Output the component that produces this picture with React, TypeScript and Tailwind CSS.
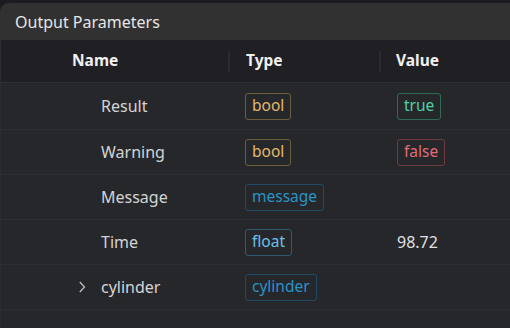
import React from "react";

type Row = {
  name: string;
  type: string;
  typeCls: string;
  value?: { text: string; cls: string } | string;
  chevron?: boolean;
};

const rows: Row[] = [
  {
    name: "Result",
    type: "bool",
    typeCls: "border-[#6e5d3c] text-[#e3b76a]",
    value: { text: "true", cls: "border-[#2f6a57] text-[#4fd1a5]" },
  },
  {
    name: "Warning",
    type: "bool",
    typeCls: "border-[#6e5d3c] text-[#e3b76a]",
    value: { text: "false", cls: "border-[#6d3b3e] text-[#e06c75]" },
  },
  {
    name: "Message",
    type: "message",
    typeCls: "border-[#1f4a63] text-[#2a93c4]",
  },
  {
    name: "Time",
    type: "float",
    typeCls: "border-[#2f5a70] text-[#6cc0ea]",
    value: "98.72",
  },
  {
    name: "cylinder",
    type: "cylinder",
    typeCls: "border-[#1f4a63] text-[#2a93c4]",
    chevron: true,
  },
];

function Badge({ text, cls }: { text: string; cls: string }) {
  return (
    <span
      className={`inline-flex h-[27px] items-center rounded-[3px] border px-[6px] text-[15.5px] leading-none ${cls}`}
    >
      {text}
    </span>
  );
}

export default function App() {
  return (
    <div
      className="h-[328px] w-[510px] overflow-hidden bg-[#1c1c20] pt-[3px] text-[#d8d8d8]"
      style={{ fontFamily: '"Segoe UI", "Noto Sans", "Open Sans", sans-serif' }}
    >
      <div className="flex h-[37px] items-center rounded-tl-[9px] bg-[#313131] pl-[15px] text-[16px] text-[#e6e6e6]">
        Output Parameters
      </div>
      <div className="h-[288px] border-l border-[#2c2c30] bg-[#26272b]">
        <div className="grid h-[43px] grid-cols-[227px_2px_149px_2px_1fr] items-center border-b border-[#2e2f33] bg-[#202024] text-[15.5px] font-bold text-[#f0f0f0]">
          <div className="pl-[71px]">Name</div>
          <div className="h-[21px] w-[2px] bg-[#2c2c30]" />
          <div className="pl-[16px]">Type</div>
          <div className="h-[21px] w-[2px] bg-[#2c2c30]" />
          <div className="pl-[15px]">Value</div>
        </div>
        {rows.map((r, i) => (
          <div
            key={r.name}
            className={`grid grid-cols-[229px_151px_1fr] items-center border-b border-[#2d2e32] text-[16px] ${
              i === 0 ? "h-[47px]" : "h-[45px]"
            }`}
          >
            <div className="relative flex items-center pl-[100px] text-[#d4d4d4]">
              {r.chevron && (
                <svg
                  className="absolute left-[77px] top-1/2 -translate-y-1/2"
                  width="8"
                  height="13"
                  viewBox="0 0 8 13"
                  fill="none"
                  stroke="#bdbdbd"
                  strokeWidth="1.3"
                >
                  <path d="M1.8 1.5 L6.5 6.5 L1.8 11.5" />
                </svg>
              )}
              {r.name}
            </div>
            <div className="pl-[15px]">
              <Badge text={r.type} cls={r.typeCls} />
            </div>
            <div className="pl-[16px]">
              {typeof r.value === "string" ? (
                <span className="text-[#e0e0e0]">{r.value}</span>
              ) : r.value ? (
                <Badge text={r.value.text} cls={r.value.cls} />
              ) : null}
            </div>
          </div>
        ))}
      </div>
    </div>
  );
}
